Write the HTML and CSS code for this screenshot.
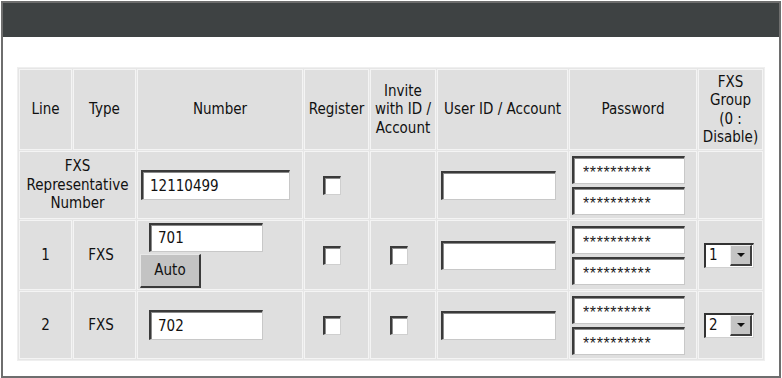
FILE: index.html
```html
<!DOCTYPE html>
<html>
<head>
<meta charset="utf-8">
<title>FXS Settings</title>
<link rel="stylesheet" href="styles.css">
</head>
<body>
<div class="frame">
  <div class="topbar"></div>
  <div class="content">
    <table class="grid">
      <tr class="row-head">
        <th class="w-line">Line</th>
        <th class="w-type">Type</th>
        <th class="w-num">Number</th>
        <th class="w-reg">Register</th>
        <th class="w-inv">Invite<br>with ID /<br>Account</th>
        <th class="w-user">User ID / Account</th>
        <th class="w-pw">Password</th>
        <th class="w-grp">FXS<br>Group<br>(0 :<br>Disable)</th>
      </tr>
      <tr class="row-rep">
        <td colspan="2">FXS<br>Representative<br>Number</td>
        <td><input class="field field-wide shift" type="text" value="12110499"></td>
        <td><input class="check shift" type="checkbox"></td>
        <td></td>
        <td><input class="field shift" type="text" value=""></td>
        <td>
          <div class="stack shift">
            <input class="field field-pw" type="text" value="**********">
            <input class="field field-pw" type="text" value="**********">
          </div>
        </td>
        <td></td>
      </tr>
      <tr class="row-one">
        <td>1</td>
        <td><span class="type">FXS</span></td>
        <td class="num-cell">
          <input class="field field-num" type="text" value="701">
          <button class="btn" type="button">Auto</button>
        </td>
        <td><input class="check shift" type="checkbox"></td>
        <td><input class="check shift" type="checkbox"></td>
        <td><input class="field shift" type="text" value=""></td>
        <td>
          <div class="stack shift">
            <input class="field field-pw" type="text" value="**********">
            <input class="field field-pw" type="text" value="**********">
          </div>
        </td>
        <td>
          <span class="select"><span class="select-val">1</span><span class="select-btn"><span class="tri"></span></span></span>
        </td>
      </tr>
      <tr class="row-two">
        <td>2</td>
        <td><span class="type">FXS</span></td>
        <td class="num-cell">
          <input class="field field-num" type="text" value="702">
        </td>
        <td><input class="check shift" type="checkbox"></td>
        <td><input class="check shift" type="checkbox"></td>
        <td><input class="field shift" type="text" value=""></td>
        <td>
          <div class="stack shift">
            <input class="field field-pw" type="text" value="**********">
            <input class="field field-pw" type="text" value="**********">
          </div>
        </td>
        <td>
          <span class="select"><span class="select-val">2</span><span class="select-btn"><span class="tri"></span></span></span>
        </td>
      </tr>
    </table>
  </div>
</div>
</body>
</html>
```

FILE: styles.css
```css
html, body {
  margin: 0;
  padding: 0;
  background: #ffffff;
}

body {
  font-family: "DejaVu Sans Condensed", "DejaVu Sans", sans-serif;
  font-stretch: condensed;
  font-size: 15px;
  line-height: 18.5px;
  color: #111111;
}

.frame {
  box-sizing: border-box;
  width: 780px;
  height: 377px;
  margin: 1px 0 0 1px;
  border: 2px solid #6e6e6e;
  display: flex;
  flex-direction: column;
}

.topbar {
  height: 34px;
  background: #3e4243;
  flex: none;
}

.content {
  padding: 30px 14px 0 14px;
}

.grid {
  table-layout: fixed;
  width: 748px;
  border-collapse: separate;
  border-spacing: 1px;
  border: 1px solid #efefef;
  background: #e6e6e6;
}

.grid th,
.grid td {
  box-sizing: border-box;
  border: 1px solid #f4f4f4;
  background: #dfdfdf;
  padding: 0;
  text-align: center;
  vertical-align: middle;
  font-weight: normal;
}

.w-line { width: 53px; }
.w-type { width: 63px; }
.w-num  { width: 166px; }
.w-reg  { width: 65px; }
.w-inv  { width: 66px; }
.w-user { width: 131px; }
.w-pw   { width: 128px; }
.w-grp  { width: 65px; }

.row-head { height: 81px; }
.row-rep  { height: 68px; }
.row-one  { height: 70px; }
.row-two  { height: 68px; }

.type {
  display: inline-block;
  margin-right: 7px;
}

.shift {
  margin-right: 9px;
}

.field {
  box-sizing: border-box;
  width: 115px;
  height: 29px;
  margin-top: 0;
  margin-bottom: 0;
  margin-left: 0;
  padding: 0 4px 0 7px;
  border-style: solid;
  border-width: 2px 1px 1px 2px;
  border-color: #3a3a3a #c8c8c8 #c8c8c8 #3a3a3a;
  box-shadow: inset 1px 1px 0 #8a8a8a;
  background: #ffffff;
  font-family: "DejaVu Sans Condensed", "DejaVu Sans", sans-serif;
  font-stretch: condensed;
  font-size: 15px;
  color: #111111;
  outline: none;
  vertical-align: middle;
}

.field-wide {
  width: 149px;
  height: 30px;
}

.field-pw {
  width: 113px;
  height: 28px;
  font-family: "Liberation Sans", sans-serif;
  font-stretch: normal;
  font-size: 16px;
  letter-spacing: 0.6px;
  padding: 5px 2px 0 9px;
  color: #222222;
}

.stack {
  display: inline-flex;
  flex-direction: column;
  gap: 3px;
  vertical-align: middle;
}

.num-cell {
  text-align: left !important;
}

.field-num {
  display: block;
  width: 114px;
  margin-left: 11px;
}

.row-two .field-num {
  height: 30px;
}

.btn {
  display: block;
  box-sizing: border-box;
  width: 61px;
  height: 34px;
  margin: 2px 0 0 2px;
  padding: 0;
  border-style: solid;
  border-width: 1px 2px 2px 1px;
  border-color: #e8e8e8 #3a3a3a #3a3a3a #e8e8e8;
  background: #c3c3c3;
  font-family: "DejaVu Sans Condensed", "DejaVu Sans", sans-serif;
  font-stretch: condensed;
  font-size: 15px;
  color: #111111;
}

.check {
  -webkit-appearance: none;
  appearance: none;
  box-sizing: border-box;
  width: 18px;
  height: 19px;
  margin: 0 9px 0 0;
  border-style: solid;
  border-width: 2px 1px 1px 2px;
  border-color: #3a3a3a #cfcfcf #cfcfcf #3a3a3a;
  box-shadow: inset 1px 1px 0 #8c8c8c;
  background: #ffffff;
  vertical-align: middle;
}

.select {
  box-sizing: border-box;
  display: inline-flex;
  width: 50px;
  height: 25px;
  margin-right: 3px;
  border-style: solid;
  border-width: 2px 1px 1px 2px;
  border-color: #333333 #d0d0d0 #d0d0d0 #333333;
  background: #ffffff;
  vertical-align: middle;
  text-align: left;
}

.select-val {
  flex: 1;
  padding-left: 3px;
  line-height: 21px;
  font-size: 15px;
}

.select-btn {
  box-sizing: border-box;
  width: 22px;
  height: 21px;
  margin: 0 1px 0 0;
  border-style: solid;
  border-width: 1px 2px 2px 1px;
  border-color: #efefef #3f3f3f #3f3f3f #efefef;
  background: #c4c4c4;
  display: flex;
  align-items: center;
  justify-content: center;
}

.tri {
  width: 0;
  height: 0;
  border-left: 4px solid transparent;
  border-right: 4px solid transparent;
  border-top: 4px solid #111111;
}
```
